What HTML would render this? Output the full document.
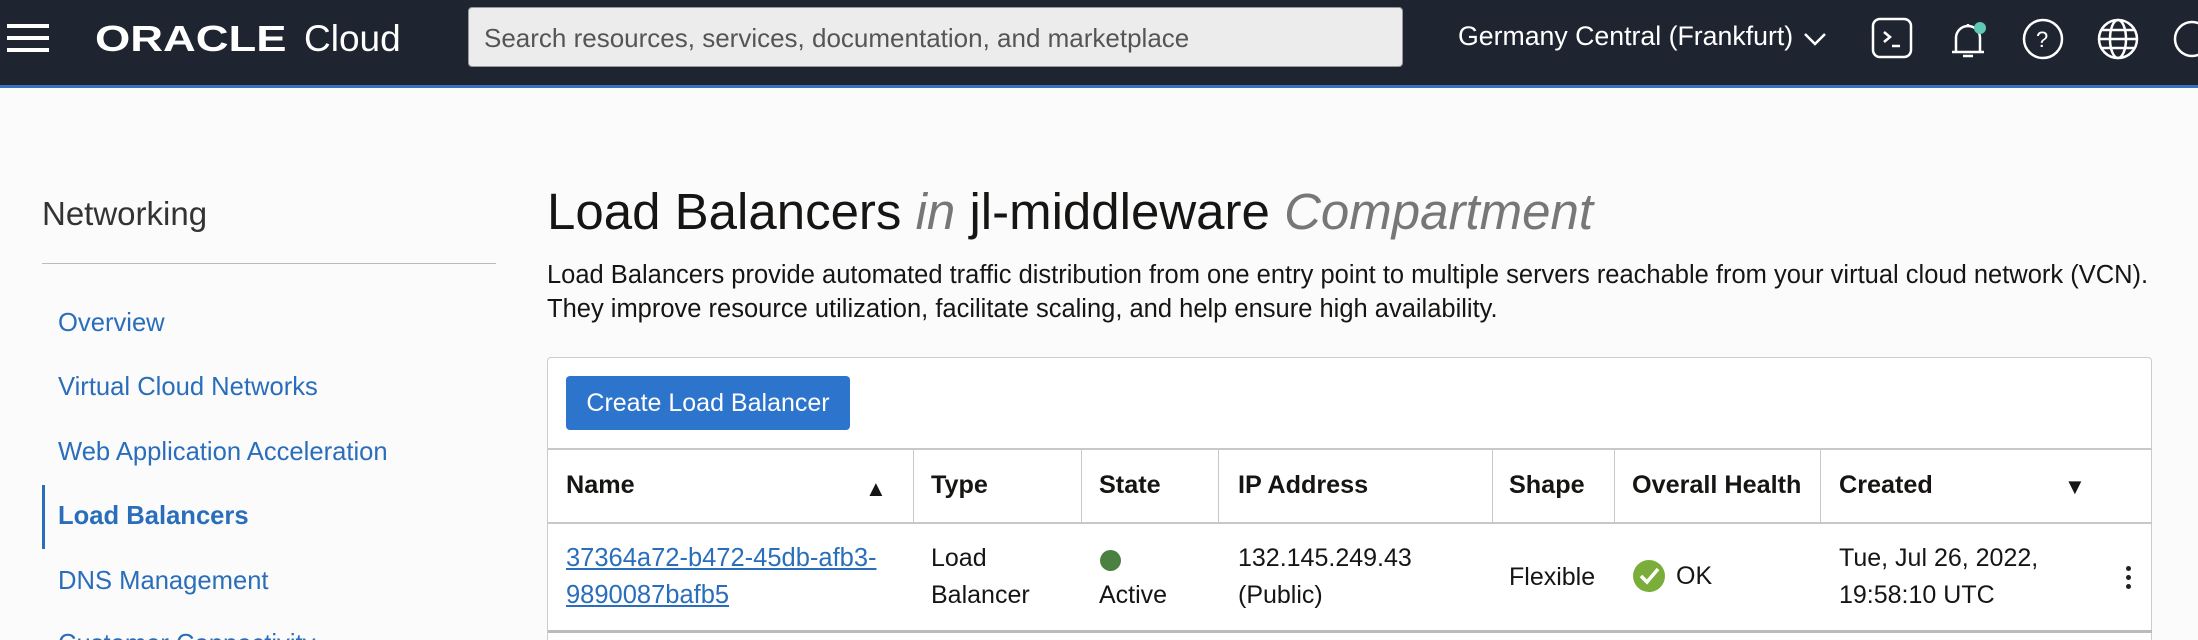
<!DOCTYPE html>
<html><head><meta charset="utf-8"><style>
*{box-sizing:border-box;margin:0;padding:0}
html{width:2198px;height:640px;overflow:hidden}
body{width:2198px;height:640px;overflow:hidden;background:#fbfbfb;font-family:"Liberation Sans",Arial,sans-serif;color:#161513;position:relative}
.hdr{position:absolute;left:0;top:0;width:2198px;height:88px;background:#1f2530;border-bottom:3px solid #3a6fbf}
.abs{position:absolute}
.w{color:#fff}
a{color:#2a6ebb}
.nav{position:absolute;left:58px;font-size:25.6px;color:#2a6ebb}
.col{position:absolute;top:449px;height:74px;border-left:1px solid #c8c8c8}
.h{position:absolute;top:471px;font-size:25.2px;font-weight:bold}
.c{position:absolute;font-size:25px;line-height:37px;top:540px}
</style></head><body>
<div class="hdr">
 <div class="abs" style="left:7px;top:24px;width:42px;height:4px;background:#fff;box-shadow:0 12px 0 #fff,0 24px 0 #fff"></div>
 <div class="abs w" style="left:95px;top:18px;font-size:36px;font-weight:bold;transform:scaleX(1.26);transform-origin:0 0">ORACLE</div>
 <div class="abs w" style="left:304px;top:18px;font-size:37px">Cloud</div>
 <div class="abs" style="left:468px;top:7px;width:935px;height:60px;background:#ececec;border-radius:4px;border:1px solid #999;font-size:26px;color:#555;padding:15px 15px">Search resources, services, documentation, and marketplace</div>
 <div class="abs w" style="left:1458px;top:21px;font-size:26.7px">Germany Central (Frankfurt)</div>
 <svg class="abs" style="left:1802px;top:30px" width="26" height="18" fill="none" stroke="#fff" stroke-width="2.5"><path d="M3 4l10 10 10-10"/></svg>
 <svg class="abs" style="left:1870px;top:16px" width="328" height="46" viewBox="0 0 328 46" fill="none" stroke="#fff" stroke-width="2.5">
  <rect x="3" y="3" width="38" height="38" rx="7"/><path d="M14 16l6 5-6 5M22 30h8"/>
  <path d="M98 8v3M86 36V22a12 12 0 0 1 24 0v14h4H82z"/><path d="M93 40h10"/><circle cx="110" cy="12" r="6" fill="#5fc9b6" stroke="none"/>
  <circle cx="173" cy="23" r="19"/><text x="166" y="31" fill="#fff" stroke="none" font-size="22" font-family="Liberation Sans">?</text>
  <circle cx="248" cy="23" r="19"/><ellipse cx="248" cy="23" rx="8" ry="19"/><path d="M229 23h38M232 14h32M232 32h32"/>
  <circle cx="322" cy="23" r="17"/>
 </svg>
</div>
<div class="abs" style="left:42px;top:195px;font-size:33px;color:#333;font-weight:300">Networking</div>
<div class="abs" style="left:42px;top:263px;width:454px;height:1px;background:#bbb"></div>
<div class="nav" style="top:309px">Overview</div>
<div class="nav" style="top:373px">Virtual Cloud Networks</div>
<div class="nav" style="top:438px">Web Application Acceleration</div>
<div class="abs" style="left:42px;top:485px;width:3px;height:64px;background:#2a6ebb"></div>
<div class="nav" style="top:502px;font-weight:bold">Load Balancers</div>
<div class="nav" style="top:567px">DNS Management</div>
<div class="nav" style="top:630px">Customer Connectivity</div>
<div class="abs" style="left:547px;top:182px;font-size:51px;color:#161513;white-space:nowrap">Load Balancers <i style="color:#777">in</i> jl-middleware <i style="color:#777">Compartment</i></div>
<div class="abs" style="left:547px;top:258px;font-size:25.5px;line-height:34px;color:#161513;white-space:nowrap">Load Balancers provide automated traffic distribution from one entry point to multiple servers reachable from your virtual cloud network (VCN).<br>They improve resource utilization, facilitate scaling, and help ensure high availability.</div>
<div class="abs" style="left:547px;top:357px;width:1605px;height:283px;background:#fff;border:1px solid #ccc;border-bottom:none;border-radius:4px 4px 0 0"></div>
<div class="abs" style="left:566px;top:376px;width:284px;height:54px;background:#2d74cc;border-radius:4px;color:#fff;font-size:25px;padding-top:13px;text-align:center">Create Load Balancer</div>
<div class="abs" style="left:548px;top:448px;width:1604px;height:2px;background:#c8c8c8"></div>
<div class="abs" style="left:548px;top:522px;width:1604px;height:2px;background:#c8c8c8"></div>
<div class="abs" style="left:548px;top:630px;width:1604px;height:3px;background:#bbb"></div>
<div class="col" style="left:913px"></div><div class="col" style="left:1081px"></div><div class="col" style="left:1218px"></div><div class="col" style="left:1492px"></div><div class="col" style="left:1614px"></div><div class="col" style="left:1820px"></div>
<div class="h" style="left:566px">Name</div><div class="abs" style="left:865px;top:476px;font-size:22px">&#9650;</div>
<div class="h" style="left:931px">Type</div>
<div class="h" style="left:1099px">State</div>
<div class="h" style="left:1238px">IP Address</div>
<div class="h" style="left:1509px">Shape</div>
<div class="h" style="left:1632px">Overall Health</div>
<div class="h" style="left:1839px">Created</div><div class="abs" style="left:2064px;top:474px;font-size:22px">&#9660;</div>
<div class="c" style="left:566px;font-size:25.5px"><a href="#">37364a72-b472-45db-afb3-<br>9890087bafb5</a></div>
<div class="c" style="left:931px">Load<br>Balancer</div>
<div class="abs" style="left:1100px;top:550px;width:21px;height:21px;border-radius:50%;background:#4a8040"></div>
<div class="c" style="left:1099px;top:577px">Active</div>
<div class="c" style="left:1238px">132.145.249.43<br>(Public)</div>
<div class="c" style="left:1509px;top:559px">Flexible</div>
<svg class="abs" style="left:1632px;top:559px" width="34" height="34"><circle cx="17" cy="17" r="16" fill="#7aad3a"/><path d="M9 17l6 6 11-13" stroke="#fff" stroke-width="3.5" fill="none"/></svg>
<div class="c" style="left:1676px;top:558px">OK</div>
<div class="c" style="left:1839px">Tue, Jul 26, 2022,<br>19:58:10 UTC</div>
<div class="abs" style="left:2126px;top:566px;width:5px;height:5px;border-radius:50%;background:#222;box-shadow:0 9px 0 #222,0 18px 0 #222"></div>
</body></html>
